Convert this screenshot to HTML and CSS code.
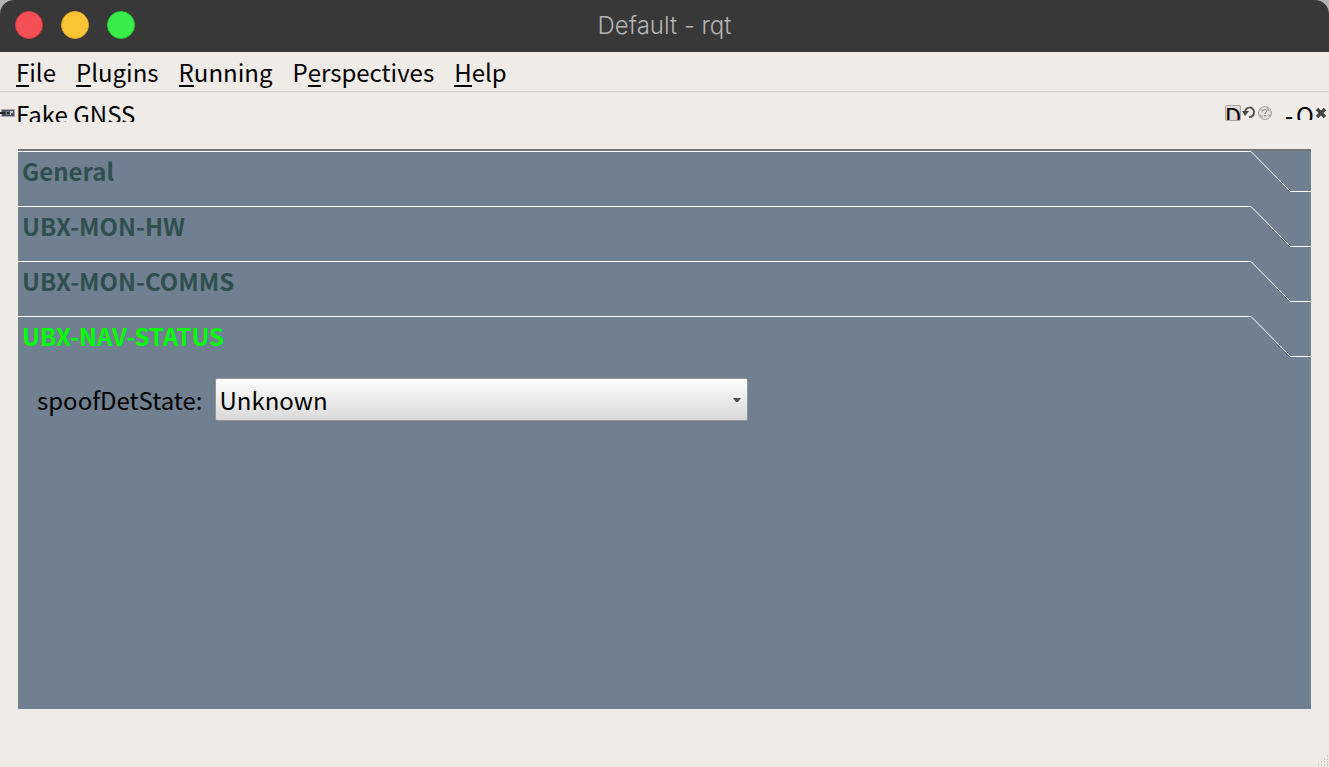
FILE: index.html
```
<!DOCTYPE html>
<html lang="en">
<head>
<meta charset="utf-8">
<title>Default - rqt</title>
<link rel="stylesheet" href="styles.css">
</head>
<body>
<div class="window">
  <header class="titlebar">
    <div class="lights">
      <button class="light light-close" aria-label="Close"></button>
      <button class="light light-min" aria-label="Minimize"></button>
      <button class="light light-max" aria-label="Maximize"></button>
    </div>
    <h1 class="title">Default - rqt</h1>
  </header>
  <nav class="menubar">
    <button class="menu"><span class="key">F</span>ile</button>
    <button class="menu"><span class="key">P</span>lugins</button>
    <button class="menu"><span class="key">R</span>unning</button>
    <button class="menu">P<span class="key">e</span>rspectives</button>
    <button class="menu"><span class="key">H</span>elp</button>
  </nav>
  <section class="dock">
    <div class="dock-bar">
      <svg class="device" viewBox="0 0 16 16" aria-hidden="true">
        <rect x="1" y="3" width="14" height="8" fill="#a4a6ac"/>
        <path d="M2 4h12v6H2z" fill="#4b505c"/>
        <path d="M0 6h5v2H0z" fill="#22252e"/>
        <path d="M6 5h3v4H6z" fill="#747b8a"/>
        <path d="M10 5h3v2h-2v2h-1z" fill="#c4c8d0"/>
        <path d="M7 6h2v2H7z" fill="#20232c"/>
      </svg>
      <h2 class="dock-title">Fake GNSS</h2>
      <div class="tools">
        <button class="tool tool-boxed">D</button>
        <button class="tool" aria-label="Reload"><svg viewBox="0 0 16 16"><path d="M4 8C4 1 13 1 13 7c0 3-2 5-5 5" fill="none" stroke="#555753" stroke-width="2"/><path d="M1 6h7l-4 5z" fill="#454744"/></svg></button>
        <button class="tool" aria-label="Help"><svg viewBox="0 0 16 16"><circle cx="8" cy="8" r="6.5" fill="#e4e3e0" stroke="#a2a29e"/><path d="M3 4l3 2M10 2l2 4M2 10l4 2M11 11l3-1" stroke="#b4b3af" stroke-width="2"/><path d="M6 6c0-2 4-2 4 0 0 1-2 1-2 3" fill="none" stroke="#777"/><path d="M7.3 10h1.4v1.5H7.3z" fill="#777"/></svg></button>
        <button class="tool tool-gap tool-bold">-</button>
        <button class="tool">O</button>
        <button class="tool" aria-label="Close panel"><svg viewBox="0 0 16 16"><path d="M4 4l8 8M12 4l-8 8" stroke="#454744" stroke-width="3.5"/></svg></button>
      </div>
    </div>
    <div class="toolbox">
      <button class="tab"><span class="tab-label">General</span><svg class="edge" viewBox="0 0 60 55"><path d="M0 .5L39.5 40.5H60" /></svg></button>
      <button class="tab"><span class="tab-label">UBX-MON-HW</span><svg class="edge" viewBox="0 0 60 55"><path d="M0 .5L39.5 40.5H60" /></svg></button>
      <button class="tab"><span class="tab-label">UBX-MON-COMMS</span><svg class="edge" viewBox="0 0 60 55"><path d="M0 .5L39.5 40.5H60" /></svg></button>
      <button class="tab tab-active"><span class="tab-label">UBX-NAV-STATUS</span><svg class="edge" viewBox="0 0 60 55"><path d="M0 .5L39.5 40.5H60" /></svg></button>
      <form class="page">
        <label class="field-label" for="spoof">spoofDetState:</label>
        <div class="combo">
          <select id="spoof" class="select"><option>Unknown</option></select>
          <svg class="arrow" viewBox="0 0 8 4" aria-hidden="true"><path d="M0 0h8L5 4H3z"/></svg>
        </div>
      </form>
    </div>
  </section>
  <svg class="grip" viewBox="0 0 12 12" aria-hidden="true"><path d="M10 1h1M7 4h1M10 4h1M4 7h1M7 7h1M10 7h1M1 10h1M4 10h1M7 10h1M10 10h1" stroke="#aaa5a0"/></svg>
</div>
</body>
</html>
```
FILE: styles.css
```
* { box-sizing: border-box; }
html { background: #b4b4b4; }
body {
  margin: 0;
  font-family: "Noto Sans CJK SC", "Noto Sans", sans-serif;
  font-size: 24px;
  line-height: 36px;
  color: #000;
}
button {
  margin: 0;
  padding: 0;
  border: 0;
  background: none;
  color: inherit;
  font: inherit;
}
.window {
  position: relative;
  display: flex;
  flex-direction: column;
  min-height: 100vh;
  border-radius: 14px 14px 0 0;
  overflow: hidden;
  background: #efebe7;
}
.titlebar {
  display: grid;
  grid-template-columns: 1fr auto 1fr;
  align-items: center;
  height: 52px;
  padding: 0 15px 2px;
  background: #383838;
}
.lights { display: flex; gap: 18px; }
.light {
  width: 28px;
  height: 28px;
  border: 1px solid;
  border-radius: 50%;
}
.light-close { background: #f55056; border-color: #de3a44; }
.light-min { background: #fbc536; border-color: #dfa526; }
.light-max { background: #3aec48; border-color: #24cd33; }
.title {
  margin: 0;
  padding-top: 2px;
  font: 300 24px/36px Inter, sans-serif;
  color: #b4b4b4;
}
.menubar {
  display: flex;
  gap: 20px;
  height: 40px;
  padding: 1px 16px 0;
  border-bottom: 1px solid #d4d0cc;
}
.key { border-bottom: 2px solid #000; display: inline-block; line-height: 26px; }
.menu { display: block; line-height: 36px; white-space: nowrap; }
.dock { flex: 1; display: flex; flex-direction: column; }
.dock-bar {
  display: flex;
  height: 30px;
  overflow: hidden;
}
.device { width: 16px; height: 16px; margin-top: 14px; }
.dock-title { flex: 1; margin: 0; padding-top: 4px; font-size: 24px; font-weight: 400; }
.tools { display: flex; padding-top: 13px; }
.tool {
  display: flex;
  align-items: flex-start;
  justify-content: center;
  width: 16px;
  height: 15px;
  overflow: hidden;
  line-height: 20px;
}
.tool svg { display: block; width: 16px; height: 16px; }
.tool-boxed { height: 16px; border: 1px solid #aaa6a2; border-radius: 2px; background: #dedad6; }
.tool-gap { margin-left: 8px; }
.tool-bold { font-weight: 500; }
.toolbox {
  flex: 1;
  margin: 27px 18px 58px;
  border-top: 2px solid #747576;
  background: #708090;
}
.tab {
  display: flex;
  width: 100%;
  height: 55px;
  text-align: left;
  font-weight: 700;
  color: #2f4f4f;
}
.tab-active { color: #0f0; }
.tab-label { flex: 1; padding: 1px 4px; border-top: 1px solid #fff; }
.edge { width: 60px; height: 55px; fill: none; stroke: #fff; }
.page {
  display: flex;
  align-items: center;
  gap: 12px;
  padding: 7px 19px;
}
.combo { position: relative; width: 533px; max-width: 100%; }
.select {
  display: block;
  appearance: none;
  width: 100%;
  height: 43px;
  padding: 0 24px 0 4px;
  border: 1px solid #969696;
  border-radius: 2px;
  background: linear-gradient(#fefefe, #d9d9d9);
  color: #000;
  font: inherit;
}
.arrow { position: absolute; right: 7px; top: 20px; width: 8px; height: 4px; fill: #505050; }
.grip { position: absolute; right: 0; bottom: 0; width: 12px; height: 12px; }
```
